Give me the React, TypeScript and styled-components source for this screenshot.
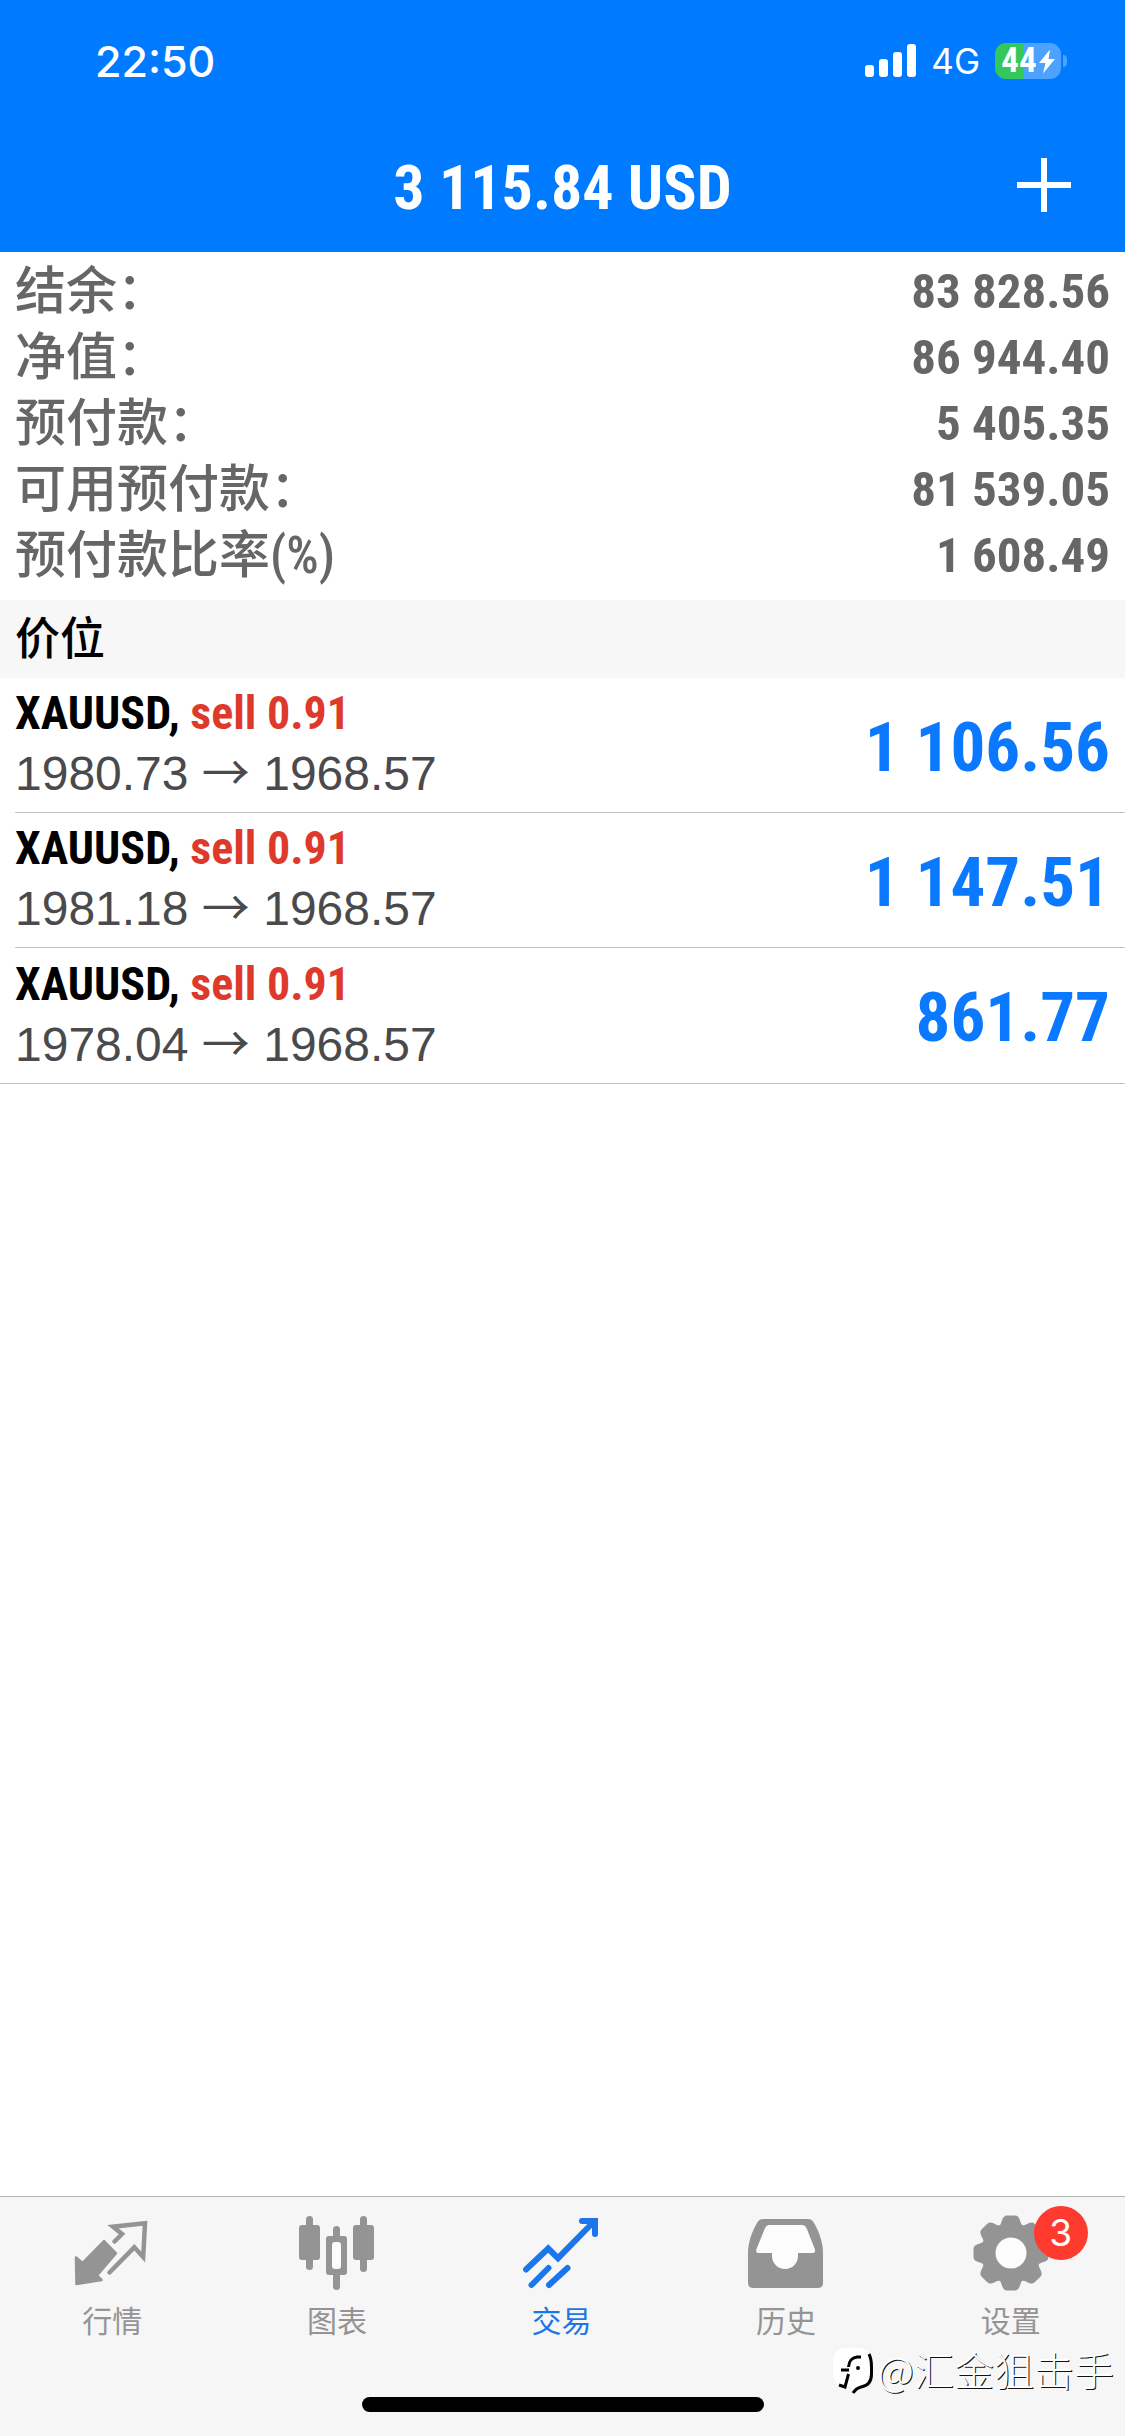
import React from "react";
import styled, { createGlobalStyle } from "styled-components";

const condensed = `"Roboto Condensed", "Noto Sans CJK SC", sans-serif`;
const sans = `"Liberation Sans", "Noto Sans CJK SC", sans-serif`;
const chinese = `"Noto Sans CJK SC", sans-serif`;
const system = `Inter, "Noto Sans CJK SC", sans-serif`;

const blue = "#007aff";
const profitBlue = "#0a78ff";

const GlobalStyle = createGlobalStyle`
  *, *::before, *::after { box-sizing: border-box; }
  body { margin: 0; background: #fff; font-family: ${sans}; }
  button { font: inherit; border: 0; padding: 0; background: none; cursor: pointer; }
`;

const Screen = styled.div`
  display: flex;
  flex-direction: column;
  min-height: 100vh;
`;

const Header = styled.header`
  background: ${blue};
  color: #fff;
`;

const StatusBar = styled.div`
  display: flex;
  align-items: center;
  justify-content: space-between;
  height: 122px;
  padding: 0 58px 0 95px;
  font-family: ${system};
`;

const Clock = styled.time`
  font-size: 43px;
  font-weight: 500;
`;

const StatusIcons = styled.div`
  display: flex;
  align-items: center;
  gap: 15px;
`;

const Network = styled.span`
  font-size: 35px;
`;

const Battery = styled.div`
  display: flex;
  align-items: center;
  gap: 2px;
`;

const BatteryBody = styled.div<{ $level: number }>`
  display: flex;
  align-items: center;
  justify-content: center;
  gap: 2px;
  width: 66px;
  height: 36px;
  border-radius: 11px;
  background: linear-gradient(to right, #34c759 ${(p) => p.$level}%, #4da2ff ${(p) => p.$level}%);
  font: 700 35px/36px ${condensed};
`;

const BatteryTip = styled.div`
  width: 4px;
  height: 12px;
  border-radius: 0 4px 4px 0;
  background: #4da2ff;
`;

const TitleBar = styled.div`
  display: grid;
  grid-template-columns: 1fr auto 1fr;
  align-items: center;
  height: 130px;
  padding: 0 54px;
`;

const Title = styled.h1`
  grid-column: 2;
  margin: 0;
  font: 700 62px ${condensed};
`;

const AddButton = styled.button`
  display: flex;
  justify-self: end;
  padding-bottom: 4px;
  color: #fff;
`;

const Summary = styled.dl`
  margin: 0;
  padding: 7px 15px 11px;
  color: #666;
`;

const SummaryRow = styled.div`
  display: flex;
  justify-content: space-between;
  height: 66px;
  line-height: 66px;
`;

const SummaryLabel = styled.dt`
  font-family: ${condensed};
  font-size: 51px;
  font-weight: 500;
`;

const SummaryValue = styled.dd`
  margin: 0;
  font-family: ${condensed};
  font-size: 49px;
  font-weight: 700;
`;

const SectionTitle = styled.h2`
  margin: 0;
  padding: 2px 15px 0;
  background: #f7f7f7;
  color: #000;
  font: 500 45px/76px ${condensed};
`;

const Positions = styled.ul`
  margin: 0;
  padding: 0;
  list-style: none;
  border-bottom: 1px solid #c4c4c6;
`;

const Position = styled.li`
  display: flex;
  align-items: center;
  justify-content: space-between;
  height: 135px;
  margin-left: 15px;
  padding-right: 15px;
  border-bottom: 1px solid #c4c4c6;
  &:last-child { border-bottom: 0; }
`;

const Symbol = styled.div`
  color: #000;
  font: 700 46px/60px ${condensed};
`;

const Side = styled.span`
  color: #de3a2c;
`;

const Prices = styled.div`
  padding-bottom: 2px;
  color: #4a4a4c;
  font: 400 48px/62px ${sans};
`;

const Arrow = styled.span`
  font-family: ${chinese};
  line-height: 1;
`;

const Profit = styled.div`
  padding-top: 4px;
  color: ${profitBlue};
  font: 700 69px ${condensed};
`;

const Footer = styled.footer`
  position: relative;
  margin-top: auto;
  height: 240px;
  border-top: 1px solid #b2b2b2;
  background: #f6f6f6;
`;

const Tabs = styled.nav`
  display: grid;
  grid-template-columns: repeat(5, 1fr);
  padding: 18px 2px 0 0;
`;

const Tab = styled.button<{ $active?: boolean }>`
  display: flex;
  flex-direction: column;
  align-items: center;
  gap: 6px;
  color: ${(p) => (p.$active ? "#1a76ea" : "#949494")};
`;

const TabIcon = styled.span`
  position: relative;
  display: flex;
`;

const TabLabel = styled.span`
  font: 400 30px/44px ${chinese};
`;

const Badge = styled.span`
  position: absolute;
  left: 61px;
  top: -9px;
  width: 54px;
  height: 54px;
  border-radius: 50%;
  background: #ff3b30;
  color: #fff;
  font: 400 37px/54px ${system};
  text-align: center;
`;

const HomeIndicator = styled.div`
  position: absolute;
  left: 50%;
  bottom: 24px;
  width: 402px;
  height: 15px;
  margin-left: -201px;
  border-radius: 8px;
  background: #000;
`;

const Watermark = styled.div`
  position: absolute;
  right: 11px;
  bottom: 36px;
  display: flex;
  align-items: center;
  gap: 4px;
  color: #fff;
  font: 300 40px/50px ${chinese};
  text-shadow: 1px 1px 0 #111;
`;

const WatermarkText = styled.span`
  padding-bottom: 6px;
`;

const SignalIcon = () => (
  <svg width="51" height="34" viewBox="0 0 51 34" fill="currentColor" aria-label="signal">
    <rect x="0" y="21" width="9" height="12" rx="3" />
    <rect x="14" y="15" width="9" height="18" rx="3" />
    <rect x="28" y="8" width="9" height="25" rx="3" />
    <rect x="42" y="0" width="9" height="33" rx="3" />
  </svg>
);

const BoltIcon = () => (
  <svg width="16" height="25" viewBox="0 0 16 24" fill="currentColor" aria-hidden="true">
    <path d="M11 0 0 13.500H6.500L4 24 16 9.500H9.500Z" />
  </svg>
);

const PlusIcon = () => (
  <svg width="54" height="54" viewBox="0 0 54 54" stroke="currentColor" strokeWidth="6" aria-hidden="true">
    <path d="M27 0V54M0 27H54" />
  </svg>
);

const icon = { width: 76, height: 76, viewBox: "0 0 76 76", "aria-hidden": true } as const;

const QuotesIcon = () => (
  <svg {...icon} fill="currentColor" strokeLinejoin="round" strokeLinecap="round">
    <path
      d="M30 26 42 38.300 23 60.500 27.500 65 2.500 69 2 42.500 8.500 48Z"
      stroke="currentColor"
      strokeWidth="2.500"
    />
    <path
      d="M40.500 26.500 48 19 39 11.700 71 8.300 69.200 42 60.300 32.300 35.500 57.500"
      fill="none"
      stroke="currentColor"
      strokeWidth="4.500"
      strokeLinejoin="miter"
    />
  </svg>
);

const ChartsIcon = () => (
  <svg {...icon} fill="currentColor">
    <rect x="7" y="1" width="7" height="54" rx="3.500" />
    <rect x="0" y="10" width="21" height="35" rx="3" />
    <rect x="34" y="11" width="7" height="64" rx="3.500" />
    <rect x="27" y="21" width="21" height="39" rx="3" />
    <rect x="33" y="27" width="9" height="27" rx="3" fill="#fcfcfc" />
    <rect x="61" y="1" width="7" height="56" rx="3.500" />
    <rect x="54" y="10" width="21" height="35" rx="3" />
  </svg>
);

const TradeIcon = () => (
  <svg {...icon} fill="none" stroke="currentColor" strokeWidth="6" strokeLinecap="round">
    <path d="M3 54.500 25.200 33.500 35 43.200 71 6.500" />
    <path d="M59 6H72V19" />
    <path d="M8.500 70 25.500 53M26 70 44.500 53" />
  </svg>
);

const HistoryIcon = () => (
  <svg {...icon} fill="currentColor">
    <path d="M15 4H60Q64 4 66 8C72 18 75 29 75 38V68Q75 73 70 73H5Q0 73 0 68V38C0 29 3 18 9 8Q11 4 15 4Z" />
    <path
      d="M21 10H54Q57 10 58.500 13L67 34.500Q67.500 38 64.500 38H50V41A13 13 0 0 1 24 41V38H11Q7.500 38 8.300 34.500L17 13Q18.500 10 21 10Z"
      fill="#fcfcfc"
    />
  </svg>
);

const SettingsIcon = () => (
  <svg {...icon} fill="currentColor">
    <circle cx="38" cy="38" r="30" />
    {[0, 45, 90, 135, 180, 225, 270, 315].map((angle) => (
      <path
        key={angle}
        d="M23 13C28 11 28 8 29.500 4Q31 0.500 34 0.500H42Q45 0.500 46.500 4C48 8 48 11 53 13L44 26H32Z"
        transform={`rotate(${angle} 38 38)`}
      />
    ))}
    <circle cx="38" cy="38" r="15.500" fill="#fcfcfc" />
  </svg>
);

const WatermarkLogo = () => (
  <svg width="41" height="48" viewBox="0 0 41 48" aria-hidden="true">
    <path d="M13 0H26C34 0 38 5 38 13V26C38 34 33 37 28 38L20 43 18 38H12C4 38 0 33 0 26V12C0 5 5 0 13 0Z" fill="#fff" />
    <g fill="none" stroke="#000" strokeWidth="3">
      <path d="M28 9H24C18 10 16 13 15.500 19M8 22H16M15.500 26 12 39 6 37" />
      <path d="M36 6C38 10 38.500 14 38.500 19V26C38.500 34 34 38 28 39 24 40 22 42 20 45" />
    </g>
    <circle cx="25" cy="20" r="2" fill="#000" />
  </svg>
);

const summary = [
  ["结余：", "83 828.56"],
  ["净值：", "86 944.40"],
  ["预付款：", "5 405.35"],
  ["可用预付款：", "81 539.05"],
  ["预付款比率(%)", "1 608.49"],
];

const positions = [
  { symbol: "XAUUSD", side: "sell 0.91", open: "1980.73", current: "1968.57", profit: "1 106.56" },
  { symbol: "XAUUSD", side: "sell 0.91", open: "1981.18", current: "1968.57", profit: "1 147.51" },
  { symbol: "XAUUSD", side: "sell 0.91", open: "1978.04", current: "1968.57", profit: "861.77" },
];

const tabs = [
  { label: "行情", Icon: QuotesIcon },
  { label: "图表", Icon: ChartsIcon },
  { label: "交易", Icon: TradeIcon, active: true },
  { label: "历史", Icon: HistoryIcon },
  { label: "设置", Icon: SettingsIcon, badge: 3 },
];

export default function App() {
  return (
    <Screen>
      <GlobalStyle />
      <Header>
        <StatusBar>
          <Clock>22:50</Clock>
          <StatusIcons>
            <SignalIcon />
            <Network>4G</Network>
            <Battery>
              <BatteryBody $level={44}>
                44
                <BoltIcon />
              </BatteryBody>
              <BatteryTip />
            </Battery>
          </StatusIcons>
        </StatusBar>
        <TitleBar>
          <Title>3 115.84 USD</Title>
          <AddButton type="button" aria-label="新订单">
            <PlusIcon />
          </AddButton>
        </TitleBar>
      </Header>

      <main>
        <Summary>
          {summary.map(([label, value]) => (
            <SummaryRow key={label}>
              <SummaryLabel>{label}</SummaryLabel>
              <SummaryValue>{value}</SummaryValue>
            </SummaryRow>
          ))}
        </Summary>
        <SectionTitle>价位</SectionTitle>
        <Positions>
          {positions.map((p) => (
            <Position key={p.open}>
              <div>
                <Symbol>
                  {p.symbol}, <Side>{p.side}</Side>
                </Symbol>
                <Prices>
                  {p.open} <Arrow>→</Arrow> {p.current}
                </Prices>
              </div>
              <Profit>{p.profit}</Profit>
            </Position>
          ))}
        </Positions>
      </main>

      <Footer>
        <Tabs>
          {tabs.map(({ label, Icon, active, badge }) => (
            <Tab key={label} type="button" $active={active} aria-current={active ? "page" : undefined}>
              <TabIcon>
                <Icon />
                {badge && <Badge>{badge}</Badge>}
              </TabIcon>
              <TabLabel>{label}</TabLabel>
            </Tab>
          ))}
        </Tabs>
        <HomeIndicator />
        <Watermark>
          <WatermarkLogo />
          <WatermarkText>@汇金狙击手</WatermarkText>
        </Watermark>
      </Footer>
    </Screen>
  );
}
